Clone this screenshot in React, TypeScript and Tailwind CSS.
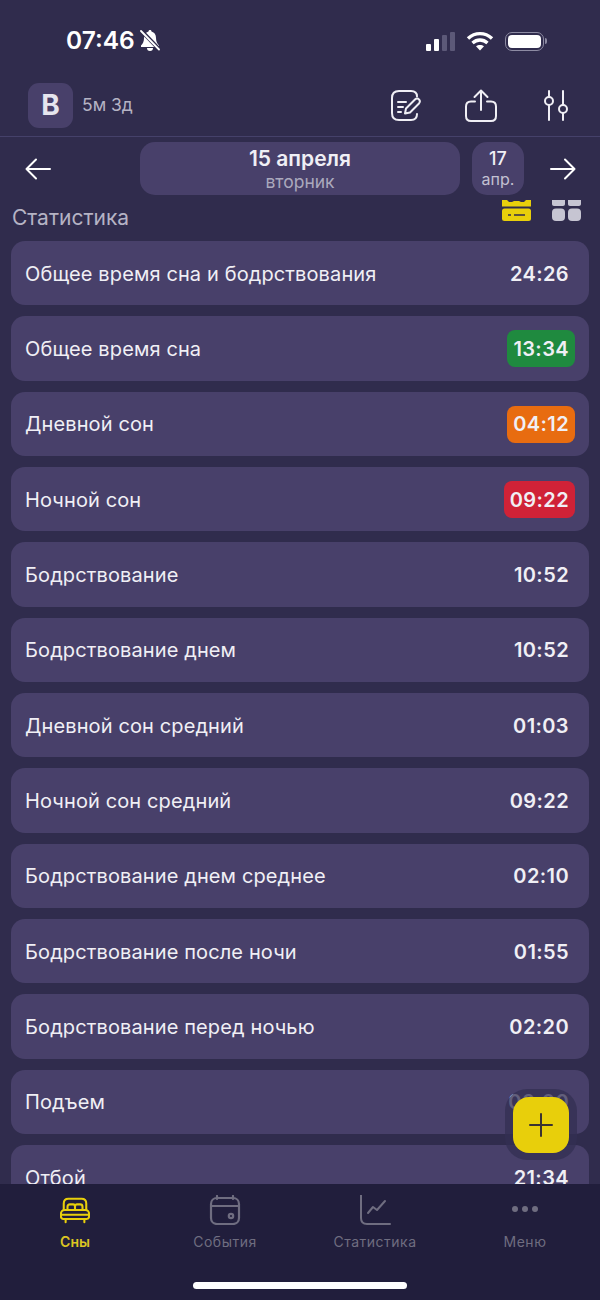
const rows: { label: string; value: string; badge?: string }[] = [
  { label: 'Общее время сна и бодрствования', value: '24:26' },
  { label: 'Общее время сна', value: '13:34', badge: 'bg-[#1f8a3f]' },
  { label: 'Дневной сон', value: '04:12', badge: 'bg-[#e86c10]' },
  { label: 'Ночной сон', value: '09:22', badge: 'bg-[#d02237]' },
  { label: 'Бодрствование', value: '10:52' },
  { label: 'Бодрствование днем', value: '10:52' },
  { label: 'Дневной сон средний', value: '01:03' },
  { label: 'Ночной сон средний', value: '09:22' },
  { label: 'Бодрствование днем среднее', value: '02:10' },
  { label: 'Бодрствование после ночи', value: '01:55' },
  { label: 'Бодрствование перед ночью', value: '02:20' },
  { label: 'Подъем', value: '06:00' },
  { label: 'Отбой', value: '21:34' },
];

function StatusBar() {
  return (
    <div className="flex h-[72px] shrink-0 items-start justify-between pl-[66px] pr-[53px] pt-[25px]">
      <div className="flex items-center gap-[5px]">
        <span className="text-[24.500px] font-semibold leading-[30px] text-white">07:46</span>
        <svg width="20" height="23" viewBox="0 0 20 23" fill="white">
          <path d="M10 1C9 1 8.500 1.700 8.500 2.500 5.500 3.300 4 5.800 4 9c0 3.500-1 5.500-3 7.500V18h18v-1.500c-2-2-3-4-3-7.500 0-3.200-1.500-5.700-4.500-6.500C11.500 1.700 11 1 10 1z" />
          <path d="M7 19a3 3 0 0 0 6 0z" />
          <path d="M1 1.500 20 21" stroke="#302c4d" strokeWidth="4" />
          <path d="M1 2l18 18.500" stroke="white" strokeWidth="1.800" strokeLinecap="round" />
        </svg>
      </div>
      <div className="flex items-center gap-[11px] pt-[6px]">
        <div className="flex items-end gap-[3px]">
          <div className="h-[7px] w-[5px] rounded-[1px] bg-white" />
          <div className="h-[12px] w-[5px] rounded-[1px] bg-white" />
          <div className="h-[16px] w-[5px] rounded-[1px] bg-[#5c5978]" />
          <div className="h-[19px] w-[5px] rounded-[1px] bg-[#5c5978]" />
        </div>
        <svg width="28" height="20" viewBox="0 0 28 20" fill="none" stroke="white" strokeWidth="3.400">
          <path d="M2 7.500c7-6.500 17-6.500 24 0" />
          <path d="M6.500 12c4.500-4 10.500-4 15 0" />
          <path d="M14 19.500l-4-4.200c2.300-1.800 5.700-1.800 8 0z" fill="white" stroke="none" />
        </svg>
        <div className="flex items-center gap-[1px]">
          <div className="flex h-[19px] w-[39px] rounded-[7px] border-[1.500px] border-[#8d8ba3] p-[2px]">
            <div className="h-full w-full rounded-[4px] bg-white" />
          </div>
          <div className="h-[6px] w-[2px] rounded-r-[2px] bg-[#8d8ba3]" />
        </div>
      </div>
    </div>
  );
}

function Header() {
  return (
    <div className="flex h-[65px] shrink-0 items-center justify-between border-b border-[#45416a] pl-[28px] pr-[31px] pt-[2px]">
      <div className="flex items-center gap-[9px]">
        <div className="flex h-[45px] w-[45px] items-center justify-center rounded-[11px] bg-[#48406a] text-[28px] font-bold text-[#e6e5ee]">
          В
        </div>
        <span className="text-[17.500px] text-[#b5b3c4]">5м 3д</span>
      </div>
      <div className="flex items-center">
        <svg width="30" height="31" viewBox="0 0 30 31" fill="none" stroke="#f0eff5" strokeWidth="2" strokeLinecap="round" strokeLinejoin="round">
          <path d="M26 6.500C26 3 23.500 1 20 1H8C3.500 1 1 3.500 1 8v15c0 4.500 2.500 7 7 7h12c3.500 0 6-2 6-6" />
          <path d="M7 12h8M7 17h5M7 22h3" />
          <path d="M14 23.500l1-5L24 9.500c1.300-1.300 3-1.300 4 0 1 1 1 2.700 0 4l-9 9z" />
        </svg>
        <svg className="ml-[44px]" width="32" height="33" viewBox="0 0 32 33" fill="none" stroke="#f0eff5" strokeWidth="2" strokeLinecap="round" strokeLinejoin="round">
          <path d="M16 21V1.500M9.500 8 16 1.500 22.500 8" />
          <path d="M10 12.500H6c-3 0-5 2-5 5V27c0 3 2 5 5 5h20c3 0 5-2 5-5v-9.500c0-3-2-5-5-5h-4" />
        </svg>
        <svg className="ml-[46px]" width="26" height="31" viewBox="0 0 26 31" fill="none" stroke="#f0eff5" strokeWidth="2" strokeLinecap="round">
          <path d="M6 1v6M6 15v15M20 1v14M20 23v7" />
          <circle cx="6" cy="11" r="4" />
          <circle cx="20" cy="19" r="4" />
        </svg>
      </div>
    </div>
  );
}

function DateRow() {
  return (
    <div className="flex h-[59px] shrink-0 items-start pt-[5px]">
      <div className="flex h-[53px] w-[140px] items-center pl-[25px]">
        <svg width="26" height="22" viewBox="0 0 26 22" fill="none" stroke="white" strokeWidth="2" strokeLinecap="round" strokeLinejoin="round">
          <path d="M25 11H1.500M11 1.500 1.500 11l9.500 9.500" />
        </svg>
      </div>
      <div className="flex h-[53px] w-[320px] flex-col items-center justify-center rounded-[15px] bg-[#48406a]">
        <span className="text-[21px] font-semibold leading-[26px] text-[#f0eff5]">15 апреля</span>
        <span className="text-[17.500px] leading-[20px] text-[#aba9bd]">вторник</span>
      </div>
      <div className="ml-[12px] flex h-[53px] w-[52px] flex-col items-center justify-center rounded-[15px] bg-[#48406a]">
        <span className="text-[18px] font-medium leading-[22px] text-[#f0eff5]">17</span>
        <span className="text-[16px] leading-[19px] text-[#c3c1d2]">апр.</span>
      </div>
      <div className="flex h-[53px] flex-1 items-center pl-[26px]">
        <svg width="26" height="22" viewBox="0 0 26 22" fill="none" stroke="white" strokeWidth="2" strokeLinecap="round" strokeLinejoin="round">
          <path d="M1 11h23.500M15 1.500l9.500 9.500-9.500 9.500" />
        </svg>
      </div>
    </div>
  );
}

function SectionTitle() {
  return (
    <div className="flex h-[45px] shrink-0 items-start justify-between pl-[12px] pr-[19px] pt-[4px]">
      <span className="pt-[6px] text-[21px] leading-[24px] text-[#b5b3c4]">Статистика</span>
      <div className="flex gap-[21px]">
        <svg width="29" height="21" viewBox="0 0 29 21" fill="#e8cf0b">
          <path d="M0 0h5l2 2h3l2-1h5l2 1h3l2-2h5v6.500H0z" />
          <rect x="0" y="8.500" width="29" height="12.500" rx="2.500" />
          <path d="M6 15h3M12 15h11" stroke="#302c4d" strokeWidth="1.600" />
        </svg>
        <svg width="29" height="21" viewBox="0 0 29 21" fill="#c6c5d2">
          <path d="M0 0h13v4c0 1.200-.8 2-2 2H2C.8 6 0 5.200 0 4zM16 0h13v4c0 1.200-.8 2-2 2h-9c-1.200 0-2-.8-2-2z" />
          <rect x="0" y="8.500" width="13" height="12.500" rx="4" />
          <rect x="16" y="8.500" width="13" height="12.500" rx="4" />
        </svg>
      </div>
    </div>
  );
}

function StatRow({ label, value, badge }: { label: string; value: string; badge?: string }) {
  return (
    <div className="flex h-[64.330px] shrink-0 items-center justify-between rounded-[14px] bg-[#48406a] px-[14px] pt-px">
      <span className="text-[20px] tracking-[0.12px] text-[#f0eff5]">{label}</span>
      <span className={`flex h-[37px] items-center rounded-[8px] px-[6px] text-[20px] font-semibold tracking-[0.4px] text-[#f0eff5] ${badge ?? ''}`}>
        {value}
      </span>
    </div>
  );
}

function TabBar() {
  return (
    <div className="relative flex h-[116px] shrink-0 flex-col bg-[#211e3c]">
      <div className="flex">
        <div className="flex w-[150px] flex-col items-center pt-[11px]">
          <svg width="30" height="30" viewBox="0 0 32 30" fill="none" stroke="#e8cf0b" strokeWidth="2.200" strokeLinecap="round" strokeLinejoin="round">
            <path d="M4 15V8c0-3 2-5 5-5h14c3 0 5 2 5 5v7" />
            <path d="M8 15v-3.500C8 10 9 9 10.500 9H14c1.300 0 2 1 2 2.500V15m0-3.500c0-1.500 1-2.500 2-2.500h3.500C23 9 24 10 24 11.500V15" />
            <path d="M5 15h22c2 0 4 1.500 4 4v3c0 1.500-1 2.500-2.500 2.500h-25C2 24.500 1 23.500 1 22v-3c0-2.500 2-4 4-4zM1 20h30M6 25v3M26 25v3" />
          </svg>
          <span className="mt-[8px] text-[14px] font-semibold leading-[18px] text-[#dcc522]">Сны</span>
        </div>
        <div className="flex w-[150px] flex-col items-center pt-[11px]">
          <svg width="32" height="30" viewBox="0 0 32 30" fill="none" stroke="#6f6d80" strokeWidth="2.200" strokeLinecap="round" strokeLinejoin="round">
            <path d="M8 1v3M24 1v3" />
            <path d="M8 3h16c3.500 0 6 2.500 6 6v14c0 3.500-2.500 6-6 6H8c-3.500 0-6-2.500-6-6V9c0-3.500 2.500-6 6-6zM2 11h28" />
            <circle cx="22" cy="21" r="2.200" />
          </svg>
          <span className="mt-[8px] text-[14px] leading-[18px] tracking-[0.5px] text-[#6f6d80]">События</span>
        </div>
        <div className="flex w-[150px] flex-col items-center pt-[11px]">
          <svg width="32" height="30" viewBox="0 0 32 30" fill="none" stroke="#6f6d80" strokeWidth="2" strokeLinecap="round" strokeLinejoin="round">
            <path d="M2 0v23c0 3.500 2 6 6 6h23" />
            <path d="M9 18l5-6 4 3 8-9" />
          </svg>
          <span className="mt-[8px] text-[14px] leading-[18px] tracking-[0.5px] text-[#6f6d80]">Статистика</span>
        </div>
        <div className="flex w-[150px] flex-col items-center pt-[11px]">
          <div className="flex h-[30px] items-center gap-[4px] pb-[2px]">
            <div className="h-[6px] w-[6px] rounded-full bg-[#6f6d80]" />
            <div className="h-[6px] w-[6px] rounded-full bg-[#6f6d80]" />
            <div className="h-[6px] w-[6px] rounded-full bg-[#6f6d80]" />
          </div>
          <span className="mt-[8px] text-[14px] leading-[18px] tracking-[0.5px] text-[#6f6d80]">Меню</span>
        </div>
      </div>
      <div className="mx-auto mt-[31px] h-[7px] w-[214px] rounded-full bg-white" />
    </div>
  );
}

export default function App() {
  return (
    <div className="relative flex h-[1300px] w-[600px] flex-col overflow-hidden bg-[#302c4d] font-['Inter',sans-serif]">
      <StatusBar />
      <Header />
      <DateRow />
      <SectionTitle />
      <div className="flex min-h-0 flex-1 flex-col gap-[11px] overflow-hidden px-[11px]">
        {rows.map((r) => (
          <StatRow key={r.label} label={r.label} value={r.value} badge={r.badge} />
        ))}
      </div>
      <TabBar />
      <div className="absolute left-[505px] top-[1089px] flex h-[71px] w-[72px] items-center justify-center rounded-[22px] bg-[#332f53]/75">
        <div className="flex h-[56px] w-[56px] items-center justify-center rounded-[16px] bg-[#e8cf0b]">
          <svg width="24" height="24" viewBox="0 0 24 24" fill="none" stroke="#3a3232" strokeWidth="2" strokeLinecap="round">
            <path d="M12 1v22M1 12h22" />
          </svg>
        </div>
      </div>
    </div>
  );
}
